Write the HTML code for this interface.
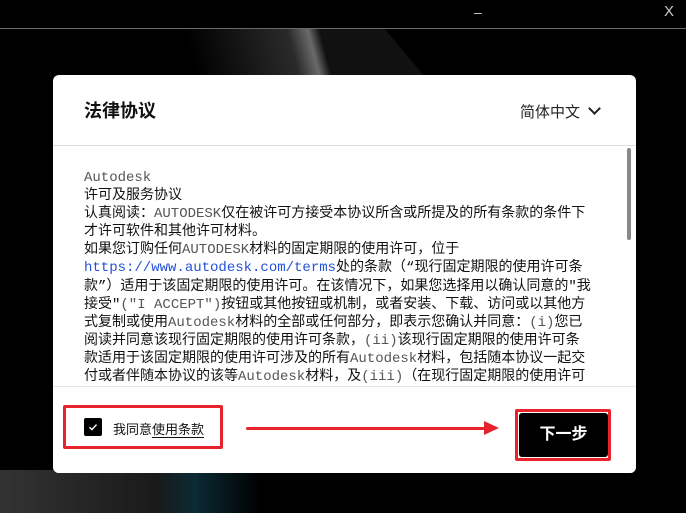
<!DOCTYPE html>
<html><head><meta charset="utf-8"><style>
body{margin:0;width:686px;height:513px;overflow:hidden;background:#000;font-family:"Liberation Sans","Noto Sans CJK SC",sans-serif;position:relative}
.bg1{position:absolute;left:150px;top:29px;width:260px;height:60px;background:linear-gradient(120deg,#000 20%,#2a2a2a 55%,#6a6a6a 62%,#111 66%);transform:skewX(40deg)}
.bg2{position:absolute;left:0;top:470px;width:260px;height:43px;background:linear-gradient(90deg,#333,#1a1a1a 60%,#0b2a33 75%,#000);}
.top{position:absolute;left:0;top:28px;width:686px;height:1px;background:#6a6a6a}
.dlg{position:absolute;left:53px;top:75px;width:583px;height:398px;background:#fff;border-radius:6px;overflow:hidden}
h1{position:absolute;left:31px;top:22px;margin:0;font-size:18px;font-weight:bold;color:#111}
.lang{position:absolute;left:467px;top:26px;font-size:15px;color:#222}
.hr{position:absolute;left:0;width:583px;height:1px;background:#ddd}
.txt{position:absolute;left:31px;top:94px;font-family:"Liberation Mono","Noto Sans CJK SC",monospace;font-size:14px;color:#111}
.txt div{height:18.1px;line-height:18.1px;white-space:nowrap}
.txt .m{color:#555}
.txt a{color:#2451d6;text-decoration:none}
.sb{position:absolute;left:574px;top:73px;width:4px;height:92px;background:#888;border-radius:2px}
.cb{position:absolute;left:31px;top:343px;width:18px;height:18px;background:#000;border-radius:2px}
.agree{position:absolute;left:60px;top:344px;font-size:13px;color:#111}
.agree u{text-underline-offset:3px}
.btn{position:absolute;left:466px;top:338px;width:89px;height:44px;background:#000;border-radius:3px;color:#fff;font-size:16px;font-weight:bold;text-align:center;line-height:44px}
.red{position:absolute;border:3px solid #e8232b;border-radius:2px}
</style></head><body>
<div class="bg1"></div><div class="bg2"></div>
<div class="top"></div>
<div style="position:absolute;left:474px;top:4px;color:#ccc;font-size:14px">–</div>
<div style="position:absolute;left:664px;top:3px;color:#ccc;font-size:15px">X</div>
<div class="dlg">
<h1>法律协议</h1>
<div class="lang">简体中文 <span style="display:inline-block;width:7px;height:7px;border-right:2px solid #222;border-bottom:2px solid #222;transform:rotate(45deg);margin:0 0 4px 6px"></span></div>
<div class="hr" style="top:70px"></div>
<div class="txt"><div><span class="m">Autodesk</span></div><div>许可及服务协议</div><div>认真阅读：<span class="m">AUTODESK</span>仅在被许可方接受本协议所含或所提及的所有条款的条件下</div><div>才许可软件和其他许可材料。</div><div>如果您订购任何<span class="m">AUTODESK</span>材料的固定期限的使用许可，位于</div><div><a>https://www.autodesk.com/terms</a>处的条款（“现行固定期限的使用许可条</div><div>款”）适用于该固定期限的使用许可。在该情况下，如果您选择用以确认同意的"我</div><div>接受"<span class="m">("I ACCEPT")</span>按钮或其他按钮或机制，或者安装、下载、访问或以其他方</div><div>式复制或使用<span class="m">Autodesk</span>材料的全部或任何部分，即表示您确认并同意：<span class="m">(i)</span>您已</div><div>阅读并同意该现行固定期限的使用许可条款，<span class="m">(ii)</span>该现行固定期限的使用许可条</div><div>款适用于该固定期限的使用许可涉及的所有<span class="m">Autodesk</span>材料，包括随本协议一起交</div><div>付或者伴随本协议的该等<span class="m">Autodesk</span>材料，及<span class="m">(iii)</span>（在现行固定期限的使用许可</div></div>
<div style="position:absolute;left:0;top:311px;width:583px;height:87px;background:#fff"></div>
<div class="sb"></div>
<div class="hr" style="top:311px;background:#e4e4e4"></div>
<div class="cb"><svg width="18" height="18" viewBox="0 0 18 18"><path d="M5.5 9.2l2.4 2.4 4.6-5" fill="none" stroke="#fff" stroke-width="1.4"/></svg></div>
<div class="agree">我同意<u>使用条款</u></div>
<div class="btn">下一步</div>
</div>
<div class="red" style="left:63px;top:405px;width:154px;height:38px"></div>
<div class="red" style="left:515px;top:409px;width:90px;height:46px"></div>
<div style="position:absolute;left:246px;top:427px;width:240px;height:3px;background:#e8232b;border-radius:2px"></div>
<div style="position:absolute;left:484px;top:421px;width:0;height:0;border-left:15px solid #e8232b;border-top:7px solid transparent;border-bottom:7px solid transparent"></div>
</body></html>
